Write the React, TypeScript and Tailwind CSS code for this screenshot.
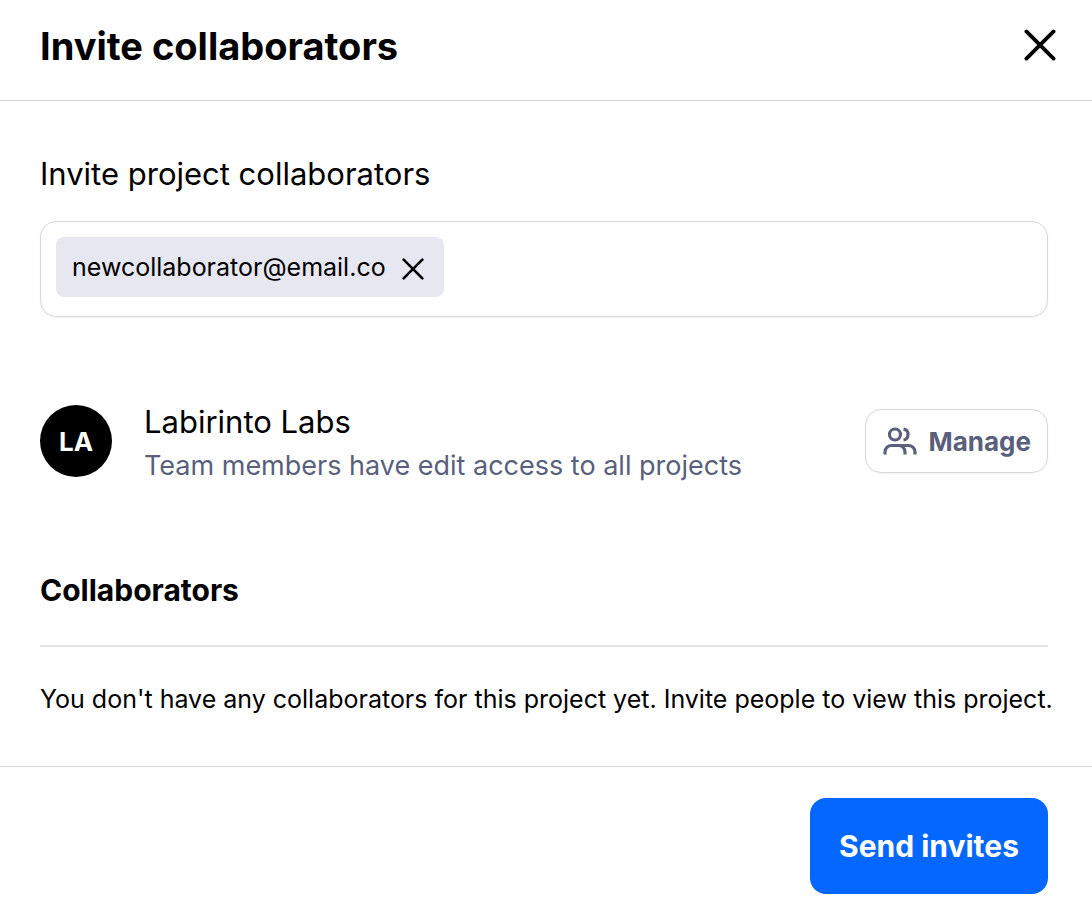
import React, { useState } from "react";

function CloseIcon({ className }: { className: string }) {
  return (
    <svg viewBox="0 0 32 32" fill="none" stroke="currentColor" strokeLinecap="round" aria-hidden="true" className={className}>
      <path d="M2.4 2.4 29.6 29.6M29.6 2.4 2.4 29.6" strokeWidth="3.8" />
    </svg>
  );
}

function TeamIcon() {
  return (
    <svg viewBox="0 0 34 28" fill="none" stroke="currentColor" strokeWidth="3.2" aria-hidden="true" className="h-7 w-[34px] shrink-0">
      <circle cx="12" cy="7.5" r="5.5" />
      <path d="M2 27.5V25a6.5 6.5 0 0 1 6.5-6.5h7A6.5 6.5 0 0 1 22 25v2.5" />
      <path d="M20.5 2a5.6 5.6 0 0 1 0 11" />
      <path d="M15 18.5h10.5A6.5 6.5 0 0 1 32 25v2.5" />
    </svg>
  );
}

export default function App() {
  const [emails, setEmails] = useState<string[]>(["newcollaborator@email.co"]);
  const [draft, setDraft] = useState("");

  const addEmail = (event: React.KeyboardEvent<HTMLInputElement>) => {
    if (event.key === "Enter" && draft.trim()) {
      event.preventDefault();
      setEmails([...emails, draft.trim()]);
      setDraft("");
    }
  };

  return (
    <main className="flex min-h-screen flex-col bg-white font-['Inter','Liberation_Sans',sans-serif] text-black">
      <header className="flex items-start justify-between border-b border-[#d8d8da] pt-5 pr-9 pb-7 pl-10">
        <h1 className="text-[38px] leading-[52px] font-bold">Invite collaborators</h1>
        <button type="button" aria-label="Close" className="mt-[9px]">
          <CloseIcon className="size-8" />
        </button>
      </header>

      <div className="flex-1 pr-11 pl-10 pt-[53px]">
        <label htmlFor="invite" className="block text-[31px] leading-10">Invite project collaborators</label>
        <div className="mt-[27px] flex min-h-24 flex-wrap items-start gap-2 rounded-2xl border border-[#d8d8da] p-[15px] shadow-xs">
          {emails.map((email) => (
            <span key={email} className="flex h-15 items-center gap-4 rounded-lg bg-[#e7e7f2] pt-0.5 pr-5 pl-4 text-[25px]">
              {email}
              <button type="button" aria-label={"Remove " + email} className="pt-0.5" onClick={() => setEmails(emails.filter((e) => e !== email))}>
                <CloseIcon className="size-[22px]" />
              </button>
            </span>
          ))}
          <input id="invite" type="email" value={draft} onChange={(e) => setDraft(e.target.value)} onKeyDown={addEmail} className="h-15 min-w-0 flex-1 text-[25px] outline-none" />
        </div>

        <section className="mt-[77px] flex items-center gap-8">
          <div className="flex size-18 shrink-0 items-center justify-center rounded-full bg-black text-[26px] font-bold text-white">LA</div>
          <div className="flex-1 pt-1.5">
            <h2 className="text-[31px] leading-11">Labirinto Labs</h2>
            <p className="text-[27px] leading-11 text-[#5a607c]">Team members have edit access to all projects</p>
          </div>
          <button type="button" className="flex h-16 items-center gap-[11px] rounded-2xl border border-[#d8d8da] pr-4 pl-[17px] text-[26px] font-bold text-[#5a607c] shadow-xs">
            <TeamIcon />
            Manage
          </button>
        </section>

        <section className="mt-[82px]">
          <h2 className="border-b-2 border-[#e4e4e4] pb-[35px] text-[30px] leading-10 font-bold">Collaborators</h2>
          <p className="mt-8 text-[25px] leading-10 whitespace-nowrap">You don't have any collaborators for this project yet. Invite people to view this project.</p>
        </section>
      </div>

      <footer className="flex justify-end border-t border-[#d8d8da] pt-[31px] pr-11 pb-7">
        <button type="button" className="h-24 rounded-2xl bg-[#0467ff] px-[29px] text-[30px] font-bold text-white">Send invites</button>
      </footer>
    </main>
  );
}
